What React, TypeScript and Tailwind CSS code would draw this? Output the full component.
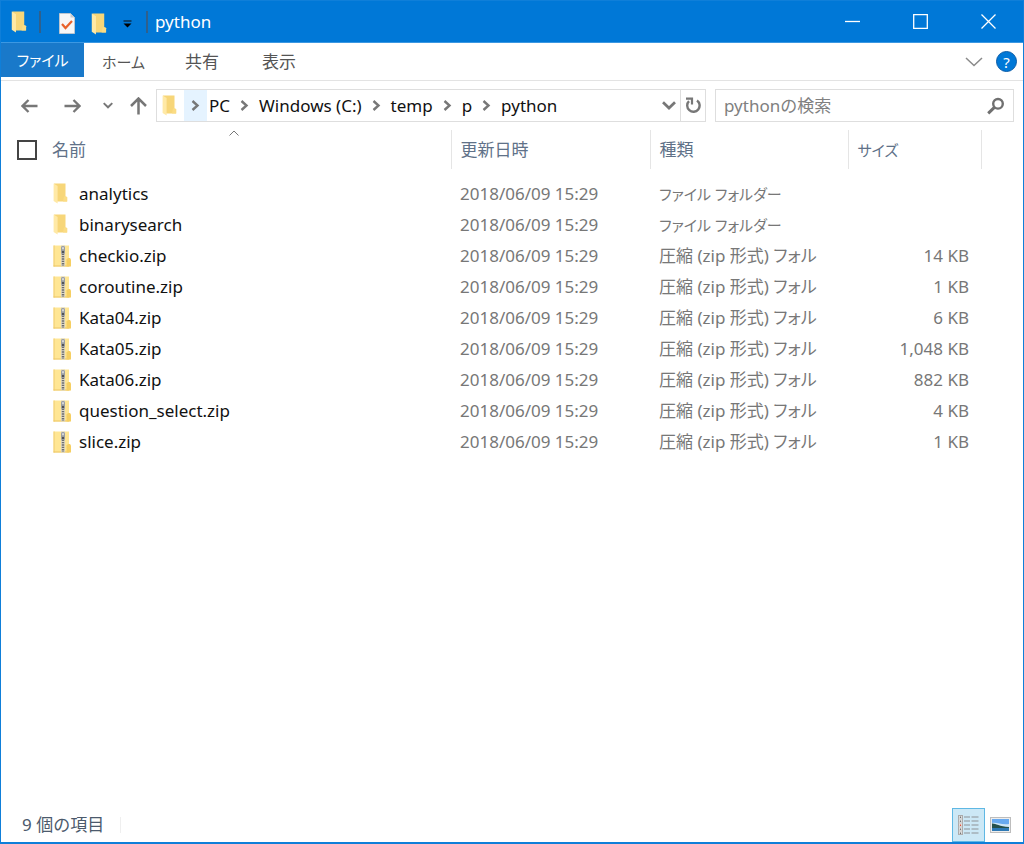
import type { ReactNode } from 'react';

type Entry = { name: string; type: string; size: string };

const FOLDER = 'ファイル フォルダー';
const ZIP = '圧縮 (zip 形式) フォル';
const MODIFIED = '2018/06/09 15:29';

const entries: Entry[] = [
  { name: 'analytics', type: FOLDER, size: '' },
  { name: 'binarysearch', type: FOLDER, size: '' },
  { name: 'checkio.zip', type: ZIP, size: '14 KB' },
  { name: 'coroutine.zip', type: ZIP, size: '1 KB' },
  { name: 'Kata04.zip', type: ZIP, size: '6 KB' },
  { name: 'Kata05.zip', type: ZIP, size: '1,048 KB' },
  { name: 'Kata06.zip', type: ZIP, size: '882 KB' },
  { name: 'question_select.zip', type: ZIP, size: '4 KB' },
  { name: 'slice.zip', type: ZIP, size: '1 KB' },
];

export default function App() {
  return (
    <div className="flex min-h-screen flex-col border border-b-2 border-[#0f7fd9] bg-white font-['Noto_Sans','Noto_Sans_CJK_JP',sans-serif] text-[17px] leading-6 text-[#111]">
      <TitleBar />
      <Ribbon />
      <AddressRow />
      <main className="grow">
        <FileTable />
      </main>
      <StatusBar />
    </div>
  );
}

function TitleBar() {
  return (
    <header className="flex h-[42px] items-center border-b border-[#3c98e2] bg-[#0078d7] pr-px text-white">
      <FolderIcon className="ml-[10px] h-[22px] w-4" />
      <span className="ml-3 h-[22px] w-[2px] bg-[#2f608c]" />
      <button aria-label="プロパティ" className="ml-[18px] mt-1">
        <CheckDocIcon />
      </button>
      <button aria-label="新しいフォルダー" className="ml-4 mt-1">
        <FolderIcon className="h-[22px] w-4" />
      </button>
      <button aria-label="カスタマイズ" className="ml-4 mt-1">
        <svg width="9" height="8" viewBox="0 0 9 8">
          <path d="M0.5 1h8" stroke="#0b2a45" strokeWidth="1.4" />
          <path d="M0.5 3.5h8L4.5 7.5z" fill="#000" />
        </svg>
      </button>
      <span className="ml-[14px] h-[22px] w-[2px] bg-[#2f608c]" />
      <h1 className="ml-[7px] grow">python</h1>
      <WindowButton label="最小化">
        <path d="M0 7.5h15" />
      </WindowButton>
      <WindowButton label="最大化">
        <path d="M0.7 0.7h13.6v13.6H0.7z" />
      </WindowButton>
      <WindowButton label="閉じる">
        <path d="M0.5 0.5l14 14M14.5 0.5l-14 14" />
      </WindowButton>
    </header>
  );
}

function WindowButton({
  label,
  children,
}: {
  label: string;
  children: ReactNode;
}) {
  return (
    <button
      aria-label={label}
      className="flex h-full w-[68px] items-center justify-center hover:bg-white/10"
    >
      <svg
        width="15"
        height="15"
        viewBox="0 0 15 15"
        fill="none"
        stroke="#fff"
        strokeWidth="1.3"
      >
        {children}
      </svg>
    </button>
  );
}

function Ribbon() {
  return (
    <nav className="flex h-[38px] items-start border-b border-[#e3e3e3] text-[#555]">
      <button className="h-[34px] w-[83px] bg-[#1979ca] text-[15px] text-white [font-feature-settings:'palt']">
        ファイル
      </button>
      <button className="h-[37px] w-[79px] text-[15px] [font-feature-settings:'palt']">
        ホーム
      </button>
      <button className="h-[37px] w-[78px]">共有</button>
      <button className="h-[37px] w-[76px]">表示</button>
      <button aria-label="リボンの展開" className="ml-auto mt-[14px]">
        <svg width="18" height="10" viewBox="0 0 18 10" fill="none">
          <path d="M1 1l8 7.5L17 1" stroke="#8a8a8a" strokeWidth="1.5" />
        </svg>
      </button>
      <button
        aria-label="ヘルプ"
        className="ml-[13px] mr-[6px] mt-2 flex size-[21px] items-center justify-center rounded-full border border-[#0a5ca8] bg-[#0078d7] text-[15px] text-white"
      >
        ?
      </button>
    </nav>
  );
}

function AddressRow() {
  return (
    <div className="flex h-[49px] items-start pr-[9px] pt-2">
      <div className="flex h-[33px] w-[155px] shrink-0 items-center text-[#777]">
        <button aria-label="戻る" className="ml-[20px]">
          <svg width="17" height="14" viewBox="0 0 17 14" fill="none">
            <path
              d="M16.5 7H2M7.5 1L1.5 7l6 6"
              stroke="currentColor"
              strokeWidth="2.3"
            />
          </svg>
        </button>
        <button aria-label="進む" className="ml-[26px]">
          <svg width="17" height="14" viewBox="0 0 17 14" fill="none">
            <path
              d="M0.5 7H15M9.5 1l6 6-6 6"
              stroke="currentColor"
              strokeWidth="2.3"
            />
          </svg>
        </button>
        <button aria-label="最近表示した場所" className="ml-[22px]">
          <Chevron className="h-[7px] w-[10px]" />
        </button>
        <button aria-label="上へ" className="ml-[17px]">
          <svg width="17" height="18" viewBox="0 0 17 18" fill="none">
            <path
              d="M8.5 17.5V2M1 9l7.5-7.5L16 9"
              stroke="currentColor"
              strokeWidth="2.5"
            />
          </svg>
        </button>
      </div>
      <div className="flex h-[33px] grow items-stretch border border-[#dedede]">
        <FolderIcon className="ml-[5px] mt-[5px] h-[21px] w-[15px]" />
        <button
          aria-label="場所"
          className="ml-[7px] flex w-[23px] items-center justify-center bg-[#e5f3ff]"
        >
          <Crumb />
        </button>
        <ol className="flex grow items-center gap-[10px] pl-[2px]">
          <li>
            <a href="#pc">PC</a>
          </li>
          <Crumb />
          <li>
            <a href="#c">Windows (C:)</a>
          </li>
          <Crumb />
          <li>
            <a href="#temp">temp</a>
          </li>
          <Crumb />
          <li>
            <a href="#p">p</a>
          </li>
          <Crumb />
          <li>
            <a href="#python">python</a>
          </li>
        </ol>
        <button aria-label="以前の場所" className="px-1 text-[#777]">
          <Chevron className="h-[9px] w-[14px]" />
        </button>
        <button
          aria-label="最新の情報に更新"
          className="flex w-[25px] items-center justify-center border-l border-[#dedede]"
        >
          <RefreshIcon />
        </button>
      </div>
      <label className="ml-[9px] flex h-[33px] w-[299px] shrink-0 items-center border border-[#dedede] pl-2 pr-2">
        <input
          type="text"
          aria-label="検索"
          placeholder="pythonの検索"
          className="min-w-0 grow outline-none placeholder:text-[#808080]"
        />
        <svg width="18" height="18" viewBox="0 0 18 18" fill="none">
          <circle cx="11" cy="6.8" r="4.8" stroke="#707070" strokeWidth="2.4" />
          <path d="M7.4 10.4L1.2 16.4" stroke="#707070" strokeWidth="3" />
        </svg>
      </label>
    </div>
  );
}

function FileTable() {
  return (
    <table className="w-full table-fixed border-collapse text-left text-[#777]">
      <colgroup>
        <col />
        <col className="w-[199px]" />
        <col className="w-[198px]" />
        <col className="w-[133px]" />
        <col className="w-[42px]" />
      </colgroup>
      <thead>
        <tr className="h-[39px] text-[#607188] [&>th]:border-r [&>th]:border-[#e5e5e5] [&>th]:p-0 [&>th]:font-normal">
          <th className="relative">
            <svg
              className="absolute left-[228px] top-0"
              width="10"
              height="6"
              viewBox="0 0 10 6"
              fill="none"
            >
              <path d="M0.5 5.5L5 1l4.5 4.5" stroke="#777" />
            </svg>
            <div className="flex items-center gap-[15px] pl-4">
              <input
                type="checkbox"
                aria-label="すべて選択"
                className="size-5 appearance-none border-2 border-[#444] bg-white checked:bg-[#0078d7]"
              />
              <span>名前</span>
            </div>
          </th>
          <th>
            <span className="pl-[9px]">更新日時</span>
          </th>
          <th>
            <span className="pl-[9px]">種類</span>
          </th>
          <th>
            <span className="pl-[9px] text-[15px] [font-feature-settings:'palt']">
              サイズ
            </span>
          </th>
          <td />
        </tr>
      </thead>
      <tbody className="before:block before:h-[9px]">
        {entries.map((entry) => (
          <tr key={entry.name} className="h-[31px] hover:bg-[#e5f3ff]">
            <td className="p-0">
              <div className="flex items-center pl-[52px] text-[#111]">
                <span className="w-[26px] shrink-0">
                  {entry.type === ZIP ? (
                    <ZipIcon />
                  ) : (
                    <FolderIcon className="h-[21px] w-[15px]" />
                  )}
                </span>
                {entry.name}
              </div>
            </td>
            <td className="p-0 pl-[9px]">{MODIFIED}</td>
            <td className="whitespace-nowrap p-0 pl-[9px] [font-feature-settings:'palt']">
              {entry.type === FOLDER ? (
                <span className="text-[15px]">{entry.type}</span>
              ) : (
                entry.type
              )}
            </td>
            <td className="p-0 pr-3 text-right">{entry.size}</td>
            <td />
          </tr>
        ))}
      </tbody>
    </table>
  );
}

function StatusBar() {
  return (
    <footer className="flex h-[34px] items-center text-[#4c5a6c]">
      <p className="border-r border-[#efefef] pl-[21px] pr-4 leading-4">
        9 個の項目
      </p>
      <button
        aria-label="詳細"
        className="ml-auto flex h-[34px] w-[33px] items-center justify-center border border-[#5fb8e4] bg-[#cce8f6]"
      >
        <DetailsIcon />
      </button>
      <button aria-label="大アイコン" className="ml-[5px] mr-3">
        <PictureIcon />
      </button>
    </footer>
  );
}

function Crumb() {
  return (
    <svg
      className="shrink-0"
      width="9"
      height="11"
      viewBox="0 0 9 11"
      fill="none"
      aria-hidden
    >
      <path d="M1.5 1l5 4.5-5 4.5" stroke="#777" strokeWidth="2.4" />
    </svg>
  );
}

function Chevron({ className }: { className: string }) {
  return (
    <svg className={className} viewBox="0 0 14 9" fill="none">
      <path d="M1 1.2l6 5.8 6-5.8" stroke="currentColor" strokeWidth="2.7" />
    </svg>
  );
}

function RefreshIcon() {
  return (
    <svg width="16" height="17" viewBox="0 0 16 17" fill="none">
      <path
        d="M12 3.5A6.2 6.2 0 1 1 4 4.2"
        stroke="#777"
        strokeWidth="2.4"
      />
      <path d="M1 1.6h6v6" stroke="#777" strokeWidth="2.2" />
    </svg>
  );
}

function FolderIcon({ className }: { className: string }) {
  return (
    <svg className={className} viewBox="0 0 15 21" aria-hidden>
      <path d="M1 0.5h11.5v13l1.5 1v4H4z" fill="#f7d679" />
      <path d="M11 13.5h2.5l0.8 1v4H10z" fill="#fbdc84" />
      <path d="M0.6 0.5L4.6 3v17.5L0.6 18z" fill="#ffe9a6" />
    </svg>
  );
}

function ZipIcon() {
  return (
    <svg width="18" height="22" viewBox="0 0 18 22" aria-hidden>
      <path d="M0.5 0.5h15.5v21H0.5z" fill="#ffe694" />
      <path d="M0.5 0.5h1.2v21H0.5z" fill="#f3d27a" />
      <path d="M0.5 20.5h16v1h-16z" fill="#edc767" />
      <path d="M13.5 14.5l1.5-1.5h2l1 1.5v7h-4.5z" fill="#f6cf62" />
      <path d="M8 0.5h4v21H8z" fill="#dcd6c2" />
      <path
        d="M10 8.5v12.5"
        stroke="#6e6e6e"
        strokeWidth="2.4"
        strokeDasharray="1.4 1"
      />
      <rect x="8" y="1" width="4" height="8" rx="1.5" fill="#9a9ea2" />
      <path d="M9.3 2.2h1.4v2H9.3z" fill="#eee" />
      <path d="M9.3 6h1.4v2H9.3z" fill="#333" />
    </svg>
  );
}

function CheckDocIcon() {
  return (
    <svg width="16" height="21" viewBox="0 0 16 21" fill="none">
      <path d="M0.5 0.5h11l4 4v16H0.5z" fill="#f7f7f7" stroke="#bcc6d0" />
      <path d="M11.5 0.5v4h4z" fill="#c5cbd2" />
      <path d="M3 11l3.5 4 6.5-7" stroke="#e8622b" strokeWidth="2.2" />
    </svg>
  );
}

function DetailsIcon() {
  const rows = [1, 5, 9, 13, 17];
  return (
    <svg width="21" height="20" viewBox="0 0 21 20">
      <rect x="0.5" y="0.5" width="4" height="19" fill="#eee" stroke="#aaa" />
      {rows.map((y) => (
        <g key={y}>
          <path d={`M0.5 ${y + 3}h4`} stroke="#bbb" />
          <rect
            x="1.8"
            y={y + 0.5}
            width="1.4"
            height="1.4"
            fill={y === 9 ? '#d8432a' : '#666'}
          />
          <path
            d={`M6 ${y + 1}h6M13.5 ${y + 1}h7`}
            stroke="#8d9296"
            strokeWidth="1.2"
          />
        </g>
      ))}
    </svg>
  );
}

function PictureIcon() {
  return (
    <svg width="21" height="16" viewBox="0 0 21 16">
      <rect x="0.5" y="0.5" width="20" height="15" fill="#eee" stroke="#bdbdbd" />
      <path d="M2 2h17v12H2z" fill="#69aaf0" />
      <path d="M2 6c5-1 9 2 17 1v3H2z" fill="#cfe6f7" />
      <path d="M2 6.5c3-.5 7 3 17 3.5v1H2z" fill="#27514b" />
      <path d="M2 11h17v3H2z" fill="#2e79b5" />
    </svg>
  );
}
